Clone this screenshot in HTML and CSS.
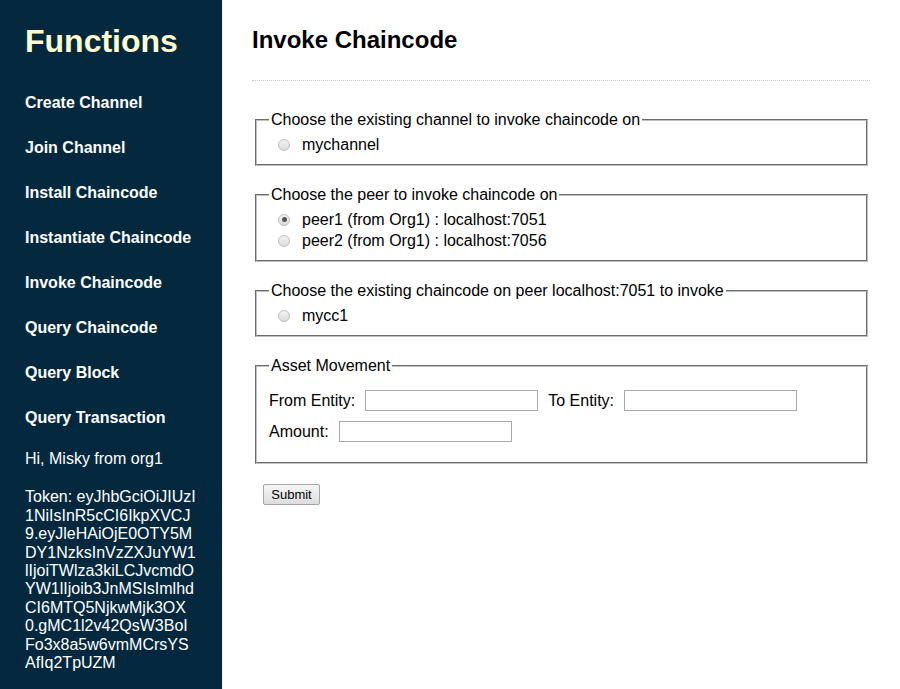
FILE: index.html
```html
<!DOCTYPE html>
<html>
<head>
<meta charset="utf-8">
<title>Invoke Chaincode</title>
<link rel="stylesheet" href="styles.css">
</head>
<body>
<div class="page">
  <aside class="sidebar">
    <h1 class="side-title">Functions</h1>
    <nav class="menu">
      <a href="#">Create Channel</a>
      <a href="#">Join Channel</a>
      <a href="#">Install Chaincode</a>
      <a href="#">Instantiate Chaincode</a>
      <a href="#">Invoke Chaincode</a>
      <a href="#">Query Chaincode</a>
      <a href="#">Query Block</a>
      <a href="#">Query Transaction</a>
    </nav>
    <p class="user">Hi, Misky from org1</p>
    <p class="token">Token: eyJhbGciOiJIUzI1NiIsInR5cCI6IkpXVCJ9.eyJleHAiOjE0OTY5MDY1NzksInVzZXJuYW1lIjoiTWlza3kiLCJvcmdOYW1lIjoib3JnMSIsImlhdCI6MTQ5NjkwMjk3OX0.gMC1l2v42QsW3BoIFo3x8a5w6vmMCrsYSAfIq2TpUZM</p>
  </aside>
  <main class="main">
    <h2 class="title">Invoke Chaincode</h2>
    <hr class="divider">
    <form class="form">
      <fieldset class="box">
        <legend>Choose the existing channel to invoke chaincode on</legend>
        <label class="opt"><input type="radio" name="channel"><span>mychannel</span></label>
      </fieldset>
      <fieldset class="box">
        <legend>Choose the peer to invoke chaincode on</legend>
        <label class="opt"><input type="radio" name="peer" checked><span>peer1 (from Org1) : localhost:7051</span></label>
        <label class="opt"><input type="radio" name="peer"><span>peer2 (from Org1) : localhost:7056</span></label>
      </fieldset>
      <fieldset class="box">
        <legend>Choose the existing chaincode on peer localhost:7051 to invoke</legend>
        <label class="opt"><input type="radio" name="cc"><span>mycc1</span></label>
      </fieldset>
      <fieldset class="box asset">
        <legend>Asset Movement</legend>
        <div class="rows">
          <div class="row">
            <label class="lbl">From Entity:</label><input class="txt" type="text">
            <label class="lbl to">To Entity:</label><input class="txt" type="text">
          </div>
          <div class="row">
            <label class="lbl">Amount:</label><input class="txt" type="text">
          </div>
        </div>
      </fieldset>
      <div class="actions"><button type="button" class="submit">Submit</button></div>
    </form>
  </main>
</div>
</body>
</html>
```

FILE: styles.css
```css
html, body {
  margin: 0;
  padding: 0;
  background: #ffffff;
}
body {
  font-family: "Liberation Sans", Arial, sans-serif;
  font-size: 16px;
  color: #000;
}
.page {
  display: flex;
  min-height: 689px;
}
.sidebar {
  width: 222px;
  flex: 0 0 222px;
  box-sizing: border-box;
  background: #04293f;
  padding: 23px 25px 20px 25px;
  color: #fff;
}
.side-title {
  margin: 0;
  font-size: 32px;
  line-height: 37px;
  font-weight: bold;
  color: #ffffcc;
}
.menu {
  display: flex;
  flex-direction: column;
  gap: 27px;
  margin-top: 34px;
}
.menu a {
  color: #fff;
  text-decoration: none;
  font-weight: bold;
  line-height: 18px;
}
.user {
  margin: 23px 0 0 0;
  line-height: 18.4px;
}
.token {
  margin: 20px 0 0 0;
  line-height: 18.4px;
  width: 172px;
  word-break: break-all;
}
.main {
  flex: 1;
  padding: 26px 30px 20px 30px;
}
.title {
  margin: 0;
  font-size: 24px;
  line-height: 28px;
  font-weight: bold;
}
.divider {
  margin: 26px 0 0 0;
  border: 0;
  border-top: 1px dotted #c8c8c8;
  height: 0;
}
.form {
  margin-top: 30px;
}
.box {
  margin: 0 2px 20px 3px;
  padding: 4.6px 12px 9px 12px;
  border: 2px groove #c0c0c0;
}
.box legend {
  padding: 0 2px;
  line-height: 18.4px;
}
.opt {
  display: flex;
  align-items: center;
  height: 21px;
}
.opt input {
  appearance: none;
  -webkit-appearance: none;
  width: 12px;
  height: 12px;
  margin: 0 12px 0 9px;
  border-radius: 50%;
  border: 1px solid #bdbdbd;
  background: linear-gradient(#f4f4f4, #dcdcdc);
  box-sizing: border-box;
  position: relative;
}
.opt input:checked::after {
  content: "";
  position: absolute;
  left: 2.5px;
  top: 2.5px;
  width: 5px;
  height: 5px;
  border-radius: 50%;
  background: #555555;
}
.rows {
  display: flex;
  flex-direction: column;
  gap: 10px;
  padding: 10px 0 11px 0;
}
.row {
  display: flex;
  align-items: center;
  height: 21px;
}
.lbl {
  margin-right: 10px;
}
.lbl.to {
  margin-left: 10px;
}
.txt {
  width: 173px;
  height: 21px;
  box-sizing: border-box;
  border: 1px solid #a9a9a9;
  padding: 1px 2px;
  font-family: "Liberation Sans", Arial, sans-serif;
  font-size: 13px;
  margin: 0;
}
.actions {
  padding: 0 0 0 11px;
}
.submit {
  font-family: "Liberation Sans", Arial, sans-serif;
  font-size: 13px;
  height: 21px;
  width: 57px;
  padding: 0;
  border: 1px solid #a6a6a6;
  border-radius: 2px;
  background: linear-gradient(#f6f6f6, #dddddd);
  color: #000;
}
```
